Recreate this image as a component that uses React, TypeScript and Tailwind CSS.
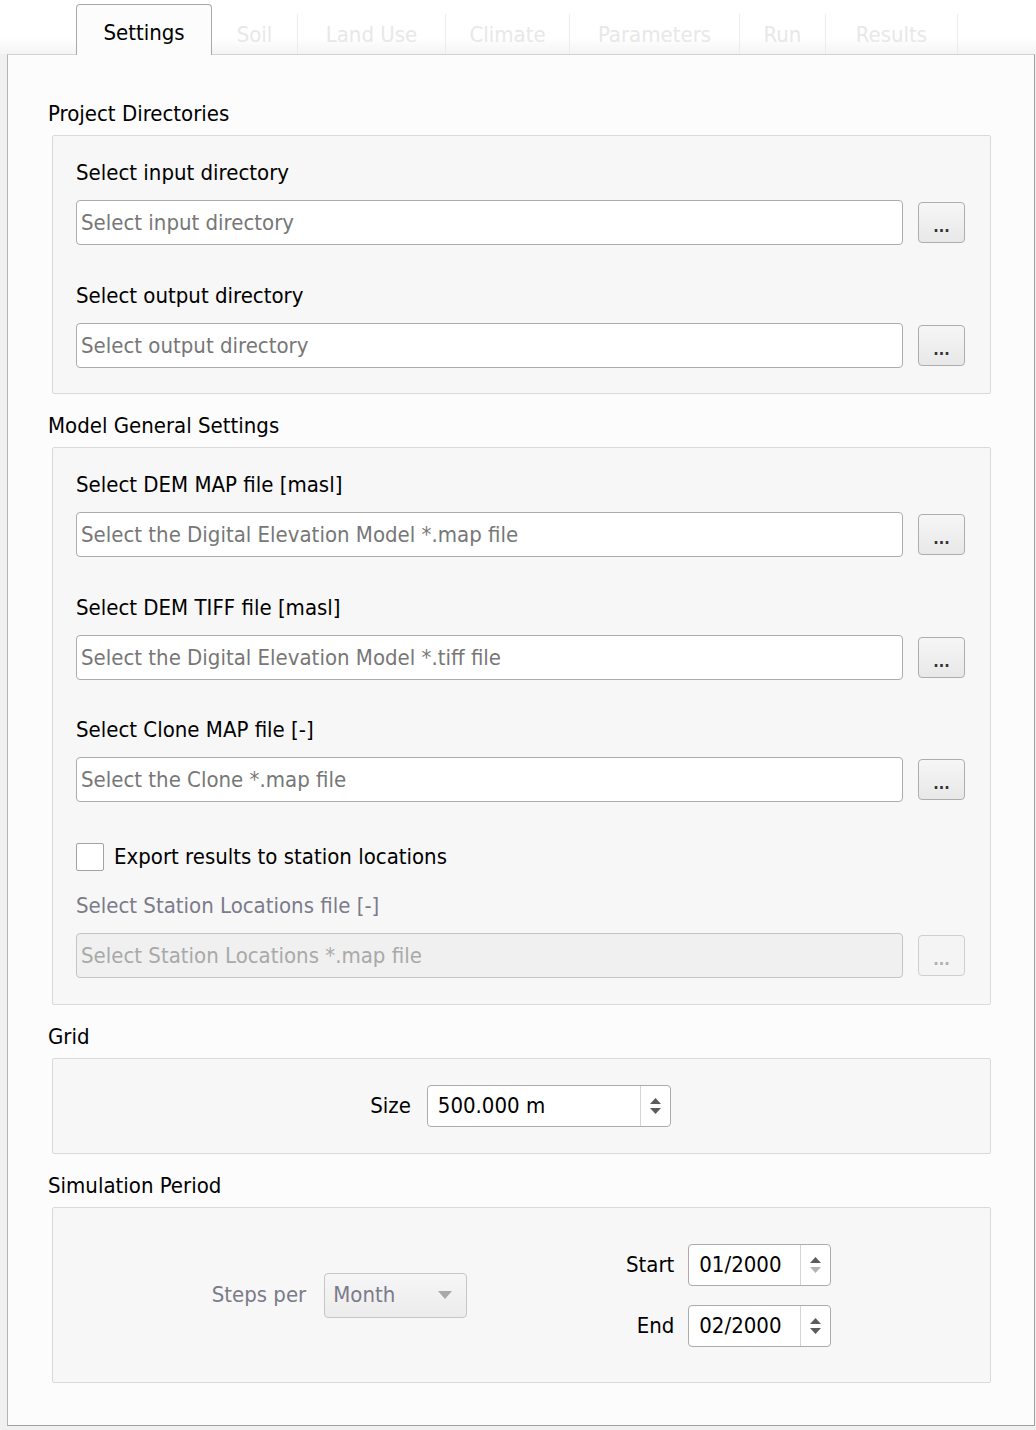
import type { ReactNode } from 'react'

const tabs = [
  { label: 'Soil', w: 'w-[86px]' },
  { label: 'Land Use', w: 'w-[148px]' },
  { label: 'Climate', w: 'w-[124px]' },
  { label: 'Parameters', w: 'w-[170px]' },
  { label: 'Run', w: 'w-[86px]' },
  { label: 'Results', w: 'w-[132px]' },
]

function Ellipsis({ disabled }: { disabled?: boolean }) {
  return (
    <button
      type="button"
      className={
        disabled
          ? 'flex h-[41px] w-[47px] shrink-0 items-end justify-center rounded-[4px] border border-[#cfcfcf] bg-[#f4f4f4] pb-[7px] text-[16px] font-bold leading-[16px] text-[#b0b0b0]'
          : 'flex h-[41px] w-[47px] shrink-0 items-end justify-center rounded-[4px] border border-[#adadad] bg-gradient-to-b from-[#f6f6f6] to-[#e8e8e8] pb-[7px] text-[16px] font-bold leading-[16px] text-[#333]'
      }
    >
      ...
    </button>
  )
}

function FileRow({ label, placeholder, disabled }: { label: string; placeholder: string; disabled?: boolean }) {
  return (
    <div className="flex flex-col">
      <div className={disabled ? 'text-[#7b7b8a]' : 'text-black'}>{label}</div>
      <div className="mt-[14px] flex items-center gap-[15px]">
        <div
          className={
            disabled
              ? 'flex h-[45px] w-[827px] items-center rounded-[4px] border border-[#c4c4c4] bg-[#f0f0f0] px-[4px] text-[#a9a9a9]'
              : 'flex h-[45px] w-[827px] items-center rounded-[4px] border border-[#acacac] bg-white px-[4px] text-[#777]'
          }
        >
          {placeholder}
        </div>
        <Ellipsis disabled={disabled} />
      </div>
    </div>
  )
}

function Arrows({ downLight }: { downLight?: boolean }) {
  return (
    <div className="flex h-full w-[30px] flex-col items-center justify-center gap-[4px] border-l border-[#d4d4d4]">
      <svg width="11" height="6" viewBox="0 0 11 6">
        <path d="M5.5 0 L11 6 L0 6 Z" fill="#5c5c5c" />
      </svg>
      <svg width="11" height="6" viewBox="0 0 11 6">
        <path d="M0 0 L11 0 L5.5 6 Z" fill={downLight ? '#b4b4b4' : '#5c5c5c'} />
      </svg>
    </div>
  )
}

function SpinBox({ value, w, downLight }: { value: string; w: string; downLight?: boolean }) {
  return (
    <div className={`flex h-[42px] ${w} items-center rounded-[4px] border border-[#acacac] bg-white`}>
      <div className="flex-1 pl-[10px] text-black">{value}</div>
      <Arrows downLight={downLight} />
    </div>
  )
}

function Group({ title, children, className }: { title: string; children: ReactNode; className?: string }) {
  return (
    <div className="flex flex-col">
      <div className="text-black">{title}</div>
      <div
        className={`ml-[4px] mt-[8px] w-[939px] rounded-[2px] border border-[#dadada] bg-[#f7f7f7] ${className ?? ''}`}
      >
        {children}
      </div>
    </div>
  )
}

export default function App() {
  return (
    <div className="h-[1430px] w-[1036px] bg-[#f0f0f0] font-['DejaVu_Sans_Condensed','DejaVu_Sans',sans-serif] text-[22px] leading-[26px] font-stretch-condensed">
      {/* Tab bar */}
      <div className="flex h-[54px] items-end bg-gradient-to-b from-white from-70% to-[#f4f4f4] pl-[76px]">
        <div className="relative z-10 -mb-px flex h-[51px] w-[136px] items-start justify-center rounded-t-[4px] border border-b-0 border-[#a9a9a9] bg-[#fcfcfc] pt-[15px]">
          Settings
        </div>
        {tabs.map((t) => (
          <div
            key={t.label}
            className={`flex h-[40px] ${t.w} items-center justify-center border-r border-[#ececec] pt-[2px] text-[#e8e8e8]`}
          >
            {t.label}
          </div>
        ))}
      </div>

      {/* Panel */}
      <div className="ml-[7px] flex h-[1372px] w-[1028px] flex-col border border-[#d2d2d2] border-b-[#a0a0a0] border-l-[#b4b4b4] border-r-[#a0a0a0] bg-[#fcfcfc] pl-[40px] pt-[46px]">
        <Group title="Project Directories" className="flex flex-col gap-[38px] px-[23px] pb-[25px] pt-[24px]">
          <FileRow label="Select input directory" placeholder="Select input directory" />
          <FileRow label="Select output directory" placeholder="Select output directory" />
        </Group>

        <div className="mt-[19px]">
          <Group title="Model General Settings" className="flex flex-col px-[23px] pb-[26px] pt-[24px]">
            <FileRow label="Select DEM MAP file [masl]" placeholder="Select the Digital Elevation Model *.map file" />
            <div className="mt-[38px]">
              <FileRow label="Select DEM TIFF file [masl]" placeholder="Select the Digital Elevation Model *.tiff file" />
            </div>
            <div className="mt-[37px]">
              <FileRow label="Select Clone MAP file [-]" placeholder="Select the Clone *.map file" />
            </div>
            <label className="mt-[41px] flex h-[28px] items-center gap-[10px]">
              <span className="h-[28px] w-[28px] rounded-[2px] border border-[#a3a3a3] bg-white" />
              <span className="text-black">Export results to station locations</span>
            </label>
            <div className="mt-[22px]">
              <FileRow
                label="Select Station Locations file [-]"
                placeholder="Select Station Locations *.map file"
                disabled
              />
            </div>
          </Group>
        </div>

        <div className="mt-[19px]">
          <Group title="Grid" className="flex h-[96px] items-center justify-center gap-[16px] pr-[2px]">
            <span className="text-black">Size</span>
            <SpinBox value="500.000 m" w="w-[244px]" />
          </Group>
        </div>

        <div className="mt-[19px]">
          <Group title="Simulation Period" className="flex h-[176px] items-center justify-evenly">
            <div className="flex items-center gap-[18px]">
              <span className="text-[#7b7b8a]">Steps per</span>
              <div className="flex h-[45px] w-[143px] items-center justify-between rounded-[4px] border border-[#c6c6c6] bg-gradient-to-b from-[#f6f6f6] to-[#ececec] pl-[8px] pr-[14px] text-[#7b7b8a]">
                Month
                <svg width="14" height="8" viewBox="0 0 14 8">
                  <path d="M0 0 L14 0 L7 8 Z" fill="#a8a8a8" />
                </svg>
              </div>
            </div>
            <div className="grid grid-cols-[auto_auto] items-center gap-x-[14px] gap-y-[19px]">
              <span className="text-right text-black">Start</span>
              <SpinBox value="01/2000" w="w-[143px]" downLight />
              <span className="text-right text-black">End</span>
              <SpinBox value="02/2000" w="w-[143px]" />
            </div>
          </Group>
        </div>
      </div>
    </div>
  )
}
